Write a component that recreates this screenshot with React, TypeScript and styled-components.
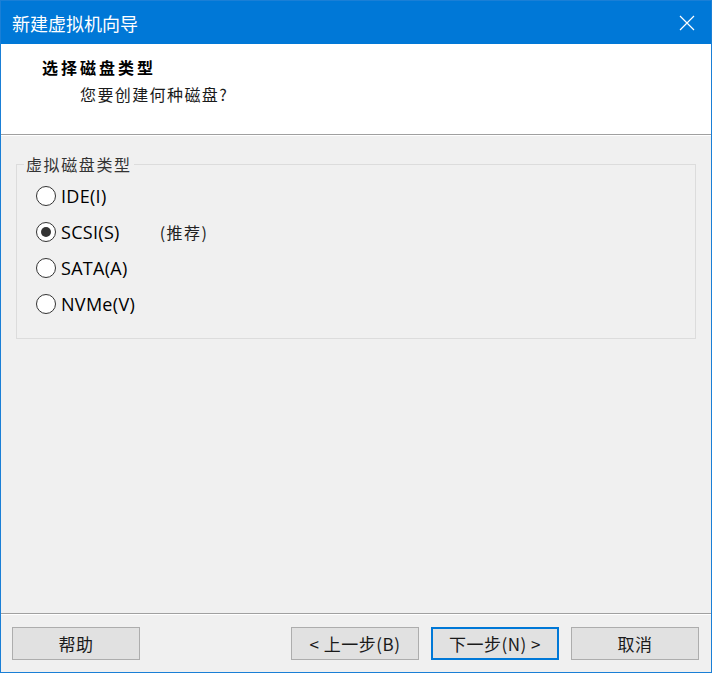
import React from 'react';
import styled, { createGlobalStyle } from 'styled-components';

const GlobalStyle = createGlobalStyle`
  html, body {
    margin: 0;
    padding: 0;
    background: #f0f0f0;
  }
  * {
    box-sizing: border-box;
  }
`;

const FONT = `"Noto Sans", "Noto Sans CJK SC", sans-serif`;

const Window = styled.div`
  width: 712px;
  height: 673px;
  border: 1px solid #1a7fd6;
  display: flex;
  flex-direction: column;
  background: #f0f0f0;
  font-family: ${FONT};
  color: #000;
`;

const TitleBar = styled.div`
  height: 43px;
  background: #0078d7;
  display: flex;
  align-items: center;
  justify-content: space-between;
  padding: 0 16px 0 11px;
  color: #fff;
  font-size: 18px;
  font-family: "Noto Sans CJK SC", sans-serif;
`;

const CloseIcon = styled.svg`
  width: 16px;
  height: 16px;
  margin-top: 1px;
`;

const Header = styled.div`
  height: 91px;
  background: #fff;
  border-bottom: 1px solid #a0a0a0;
  padding: 13px 0 0 41px;
`;

const HeaderTitle = styled.div`
  font-family: "Noto Sans CJK SC", serif;
  font-weight: 700;
  font-size: 16px;
  line-height: 20px;
  letter-spacing: 3px;
`;

const HeaderSub = styled.div`
  font-family: "Noto Sans CJK SC", serif;
  font-size: 16px;
  line-height: 20px;
  margin: 7px 0 0 38px;
  letter-spacing: 1.4px;
  color: #1a1a1a;
`;

const Body = styled.div`
  flex: 1;
  padding: 20px 15px 0 15px;
  border-top: 1px solid #ffffff;
`;

const GroupBox = styled.fieldset`
  margin: 0;
  height: 183px;
  border: 1px solid #dcdcdc;
  padding: 0;
`;

const Legend = styled.legend`
  font-family: "Noto Sans CJK SC", sans-serif;
  font-size: 16px;
  letter-spacing: 1.6px;
  color: #333;
  padding: 0 2px;
  margin-left: 7px;
  line-height: 16px;
`;

const OptionList = styled.div`
  display: flex;
  flex-direction: column;
  gap: 16px;
  padding: 14px 0 0 19px;
`;

const Option = styled.label`
  display: flex;
  align-items: center;
  height: 20px;
  font-size: 18px;
  letter-spacing: 0.3px;
  color: #000;
  font-family: "Open Sans", "Noto Sans CJK SC", sans-serif;
`;

const RadioCircle = styled.span<{ $checked?: boolean }>`
  width: 20px;
  height: 20px;
  border-radius: 50%;
  border: 1px solid #333;
  background: #fff;
  display: flex;
  align-items: center;
  justify-content: center;
  margin-right: 5px;
  flex-shrink: 0;

  &::after {
    content: '';
    width: 10px;
    height: 10px;
    border-radius: 50%;
    background: ${p => (p.$checked ? '#333' : 'transparent')};
  }
`;

const Hint = styled.span`
  margin-left: 40px;
  font-family: "Noto Sans CJK SC", sans-serif;
  font-size: 16px;
  letter-spacing: 1.5px;
  color: #222;
`;

const Footer = styled.div`
  border-top: 1px solid #a0a0a0;
  box-shadow: inset 0 1px 0 #fff;
  height: 59px;
  padding: 13px 12px 0 11px;
  display: flex;
  gap: 12px;
`;

const Spacer = styled.div`
  flex: 1;
`;

const Button = styled.button<{ $default?: boolean }>`
  width: 128px;
  height: 33px;
  background: #e1e1e1;
  border: ${p => (p.$default ? '2px solid #0078d7' : '1px solid #adadad')};
  font-family: "Noto Sans CJK SC", sans-serif;
  font-size: 17px;
  color: #1a1a1a;
  padding: 0;
  display: flex;
  align-items: center;
  justify-content: center;
  letter-spacing: 0.5px;
`;

const options = [
  { label: 'IDE(I)' },
  { label: 'SCSI(S)', checked: true, hint: '(推荐)' },
  { label: 'SATA(A)' },
  { label: 'NVMe(V)' },
];

export default function App() {
  return (
    <>
      <GlobalStyle />
      <Window>
        <TitleBar>
          <span>新建虚拟机向导</span>
          <CloseIcon viewBox="0 0 16 16">
            <path d="M1 1 L15 15 M15 1 L1 15" stroke="#fff" strokeWidth="1.2" fill="none" />
          </CloseIcon>
        </TitleBar>
        <Header>
          <HeaderTitle>选择磁盘类型</HeaderTitle>
          <HeaderSub>您要创建何种磁盘?</HeaderSub>
        </Header>
        <Body>
          <GroupBox>
            <Legend>虚拟磁盘类型</Legend>
            <OptionList>
              {options.map(o => (
                <Option key={o.label}>
                  <RadioCircle $checked={o.checked} />
                  {o.label}
                  {o.hint && <Hint>{o.hint}</Hint>}
                </Option>
              ))}
            </OptionList>
          </GroupBox>
        </Body>
        <Footer>
          <Button>帮助</Button>
          <Spacer />
          <Button>&lt; 上一步(B)</Button>
          <Button $default>下一步(N) &gt;</Button>
          <Button>取消</Button>
        </Footer>
      </Window>
    </>
  );
}
